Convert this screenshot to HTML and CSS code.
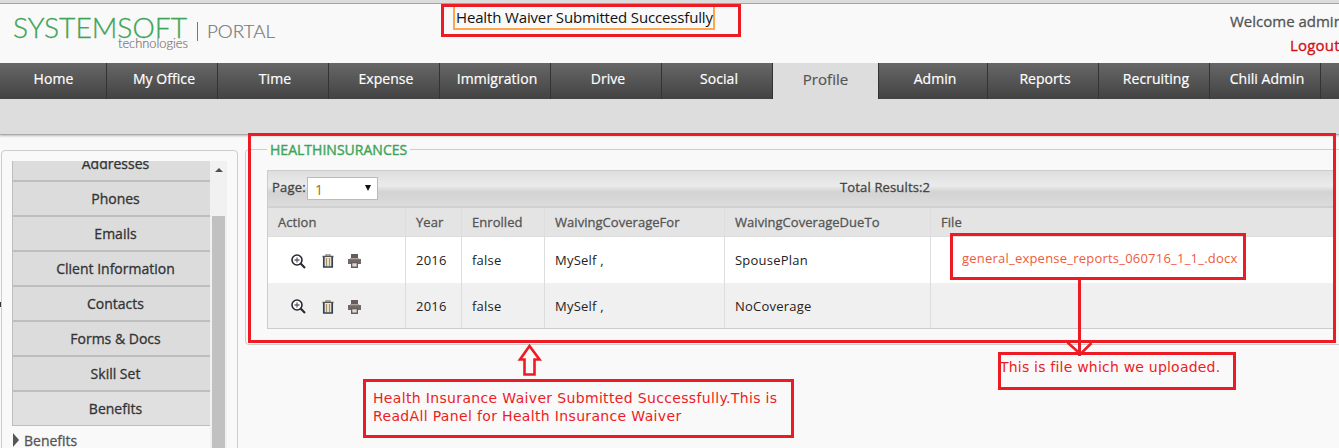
FILE: index.html
```
<!DOCTYPE html>
<html lang="en">
<head>
<meta charset="utf-8">
<title>Systemsoft Portal</title>
<link rel="stylesheet" href="styles.css">
</head>
<body>
<svg class="defs" width="0" height="0" aria-hidden="true">
  <symbol id="zoom" viewBox="0 0 15 15"><circle cx="6" cy="6" r="5" fill="#fff" stroke="#272a31" stroke-width="1.6"/><path d="M9.6 9.6L14 14" stroke="#272a31" stroke-width="2.1"/><path d="M3.5 6h5M6 3.500v5" stroke="#705b70" stroke-width="1.3"/></symbol>
  <symbol id="trash" viewBox="0 0 12 14"><path d="M4 2V.8h4V2" fill="none" stroke="#8a8378" stroke-width="1.2"/><path d="M.5 2.500h11" stroke="#55534f" stroke-width="1.500"/><path d="M1.800 3v10h8.400V3" fill="#f2e6cd" stroke="#2d4257" stroke-width="1.700"/><path d="M4.500 4v8M7.500 4v8" stroke="#a3926f" stroke-width="1.200"/></symbol>
  <symbol id="print" viewBox="0 0 13 14"><path d="M3 0h7v4H3z" fill="#665d5b"/><path d="M0 5h13v5H0z" fill="#716866"/><path d="M2 4h9v1.300H2z" fill="#aaa3a0"/><path d="M3 8h7v6H3z" fill="#665d5b"/><path d="M4.300 9.300h4.400v3.200H4.300z" fill="#ded9d6"/></symbol>
</svg>
<div class="page">
  <header class="header">
    <svg class="logo" width="290" height="59" viewBox="0 4 290 59">
      <text class="logo-main" x="13" y="38" textLength="174" lengthAdjust="spacingAndGlyphs">SYSTEMSOFT</text>
      <text class="logo-sub" x="118" y="48" textLength="70" lengthAdjust="spacingAndGlyphs">technologies</text>
      <path d="M197.5 22v19" stroke="#777"/>
      <text class="logo-portal" x="207" y="38" textLength="68" lengthAdjust="spacingAndGlyphs">PORTAL</text>
    </svg>
    <div class="notice"><span class="notice-text">Health Waiver Submitted Successfully</span></div>
    <div class="account"><span class="welcome">Welcome admin</span><a class="logout">Logout</a></div>
  </header>
  <nav class="nav">
    <a class="tab home">Home</a><a class="tab">My Office</a><a class="tab">Time</a><a class="tab">Expense</a><a class="tab">Immigration</a><a class="tab">Drive</a><a class="tab">Social</a><a class="tab active">Profile</a><a class="tab admin">Admin</a><a class="tab">Reports</a><a class="tab">Recruiting</a><a class="tab">Chili Admin</a><a class="tab rest"></a>
  </nav>
  <div class="subbar"></div>
  <div class="content">
    <aside class="side">
      <div class="list">
        <a class="item">Addresses</a><a class="item">Phones</a><a class="item">Emails</a><a class="item">Client Information</a><a class="item">Contacts</a><a class="item">Forms &amp; Docs</a><a class="item">Skill Set</a><a class="item open">Benefits</a>
        <div class="sub"><i class="caret"></i>Benefits</div>
      </div>
      <div class="scroll"><i class="up"></i><div class="thumb"></div></div>
    </aside>
    <section class="panel">
      <h2 class="legend"><span>HEALTHINSURANCES</span></h2>
      <div class="grid">
        <div class="toolbar"><span class="page-label">Page:</span><span class="select"><span>1</span><i class="down"></i></span><span class="total">Total Results:2</span></div>
        <div class="row head"><div>Action</div><div>Year</div><div>Enrolled</div><div>WaivingCoverageFor</div><div>WaivingCoverageDueTo</div><div>File</div></div>
        <div class="row"><div class="acts"><svg class="i-zoom"><use href="#zoom"/></svg><svg class="i-trash"><use href="#trash"/></svg><svg class="i-print"><use href="#print"/></svg></div><div>2016</div><div>false</div><div>MySelf ,</div><div>SpousePlan</div><div><a class="file">general_expense_reports_060716_1_1_.docx</a></div></div>
        <div class="row even"><div class="acts"><svg class="i-zoom"><use href="#zoom"/></svg><svg class="i-trash"><use href="#trash"/></svg><svg class="i-print"><use href="#print"/></svg></div><div>2016</div><div>false</div><div>MySelf ,</div><div>NoCoverage</div><div></div></div>
      </div>
    </section>
  </div>
  <i class="speck"></i>
  <svg class="marks" width="1339" height="448" fill="none" stroke="#ed1c24" stroke-width="3">
    <path d="M442.500 5.500H739.500V35.500H442.500z"/>
    <path d="M249.500 134.500H1334.500V341.500H249.500z"/>
    <path d="M951.500 234.500H1244.500V278.500H951.500z"/>
    <path d="M1079.500 280V356"/>
    <path d="M1067.500 342.500L1080.500 354L1091.500 343" stroke-width="2.500"/>
    <path d="M999.500 353.500H1234.500V388.500H999.500z"/>
    <path d="M364.500 380.500H792.500V436.500H364.500z"/>
    <path d="M529.500 346L520 359.500H524.500V374.500H534.500V359.500H539.500z" stroke-width="2.600"/>
  </svg>
  <p class="note note-panel">Health Insurance Waiver Submitted Successfully.This is<br>ReadAll Panel for Health Insurance Waiver</p>
  <p class="note note-file">This is file which we uploaded.</p>
</div>
</body>
</html>
```
FILE: styles.css
```
* { box-sizing: border-box; }
body { margin: 0; background: #f9f9f9; font-family: "Open Sans", sans-serif; color: #222; }
.defs { position: absolute; }
.page { position: relative; width: 1339px; height: 448px; overflow: hidden; border-top: 3px solid #ddd; }
.header { height: 60px; display: flex; border-top: 1px solid #a3a3a3; }
.logo { flex: none; font-family: Lato, sans-serif; }
.logo-main { font-size: 27px; font-weight: 300; fill: #3ea558; stroke: #3ea558; stroke-width: .3px; }
.logo-sub { font-size: 13px; fill: #777; font-weight: 300; stroke: #777; stroke-width: .2px; }
.logo-portal { font-size: 17px; fill: #777; font-weight: 300; stroke: #777; stroke-width: .2px; }
.notice { flex: none; margin-left: 163px; width: 262px; height: 26px; border: 2px solid #ffa64d; border-top: 0; padding-left: 1px; white-space: nowrap; }
.notice-text { font-size: 15px; line-height: 27px; color: #111; letter-spacing: -.15px; }
.account { flex: none; margin-left: 515px; width: 130px; display: flex; flex-direction: column; color: #555; font-size: 15px; line-height: 24px; padding-top: 5px; white-space: nowrap; -webkit-text-stroke: .3px; }
.logout { margin-left: 60px; color: #d10f14; letter-spacing: .2px; }
.nav { height: 36px; display: flex; overflow: hidden; background: #ddd; }
.tab { flex: none; width: 111px; padding-left: 4px; border-right: 1px solid #333; background: linear-gradient(#676767, #424242); color: #fff; text-align: center; font-size: 14px; line-height: 32px; letter-spacing: .05px; -webkit-text-stroke: .2px; }
.home { width: 107px; padding-left: 1px; }
.active { width: 106px; padding: 0; background: #ddd; color: #555; font-size: 15px; line-height: 33px; }
.admin { width: 109px; }
.rest { width: 30px; }
.subbar { height: 36px; background: #ddd; border-bottom: 1px solid #aaa; box-shadow: 0 1px 2px #bbb; }
.content { display: flex; padding-left: 1px; padding-top: 14px; }
.side { flex: none; width: 237px; height: 310px; margin-top: 1px; border: 1px solid #ccc; border-radius: 4px; padding: 10px 10px 0; display: flex; }
.list { width: 198px; height: 300px; overflow: hidden; display: flex; flex-direction: column; }
.item { flex: none; height: 35px; border: 1px solid #bebebe; border-right: 0; background: #dcdcdc; color: #333; text-align: center; font-size: 14px; line-height: 34px; padding-left: 8px; -webkit-text-stroke: .3px; }
.item:first-child { margin-top: -15px; }
.open { background: #e0e0e0; }
.sub { display: flex; align-items: center; gap: 5px; height: 28px; padding-left: 1px; font-size: 14px; color: #555; -webkit-text-stroke: .3px; }
.caret { border: 7px solid transparent; border-left: 6px solid #555; border-right: 0; }
.scroll { width: 17px; background: #f1f1f1; padding: 7px 2px 0; display: flex; flex-direction: column; align-items: center; }
.up { border: 4px solid transparent; border-top: 0; border-bottom: 4px solid #505050; }
.thumb { width: 13px; margin-top: 44px; flex: 1; background: #c1c1c1; }
.panel { flex: none; width: 1110px; height: 196px; margin-left: 7px; border: 1px solid #ccc; border-radius: 4px; padding-left: 21px; }
.legend { margin: -11px 0 0; height: 22px; display: flex; font-size: 14px; line-height: 22px; font-weight: 400; color: #3ea558; -webkit-text-stroke: .4px; }
.legend span { background: #f9f9f9; padding: 0 2px 0 3px; width: 143px; white-space: nowrap; letter-spacing: .02px; }
.grid { width: 1067px; margin-top: 9px; border: 1px solid #ccc; border-right: 0; font-size: 13px; }
.toolbar { height: 37px; display: flex; align-items: center; padding: 0 0 2px 4px; border-bottom: 2px solid #d0d0d0; background: linear-gradient(#dedede, #ebebeb 42%, #d3d3d3 60%, #dcdcdc); color: #444; -webkit-text-stroke: .3px; }
.page-label { width: 35px; white-space: nowrap; letter-spacing: .2px; }
.page-label, .total { margin-top: -2px; }
.select { width: 71px; height: 23px; margin-top: 2px; background: #fff; border: 1px solid #bbb; display: flex; justify-content: space-between; align-items: center; padding: 2px 6px 0 7px; color: #a56b13; font-size: 14px; -webkit-text-stroke: 0; }
.down { border: 3px solid transparent; border-top: 6px solid #111; border-bottom: 0; margin-top: -4px; }
.total { margin-left: 462px; letter-spacing: .15px; }
.row { display: grid; grid-template-columns: 138px 56px 83px 180px 206px 1fr; height: 46px; background: #fff; letter-spacing: .22px; }
.row > div { border-right: 1px solid #ddd; padding-left: 10px; display: flex; align-items: center; white-space: nowrap; }
.row > div:last-child { border-right: 0; }
.row.even { height: 45px; background: #f0f0f0; }
.row.head { height: 29px; background: #e4e4e4; color: #555; border-bottom: 1px solid #ddd; letter-spacing: .04px; -webkit-text-stroke: .3px; }
.row > .acts { padding: 2px 0 0 23px; }
.i-zoom { width: 15px; height: 15px; }
.i-trash { width: 12px; height: 14px; margin-left: 16px; }
.i-print { width: 13px; height: 14px; margin-left: 14px; }
.file { color: #ef5b3c; padding-left: 21px; margin-top: -5px; }
.speck { position: absolute; left: 0; top: 299px; width: 1px; height: 5px; background: #333; }
.marks { position: absolute; left: 0; top: -3px; }
.note { position: absolute; margin: 0; color: #ed1c24; font-family: "DejaVu Sans", sans-serif; font-size: 14px; line-height: 18px; white-space: nowrap; letter-spacing: .34px; }
.note-panel { left: 373px; top: 386px; }
.note-file { left: 1000px; top: 355px; letter-spacing: .21px; }
```
